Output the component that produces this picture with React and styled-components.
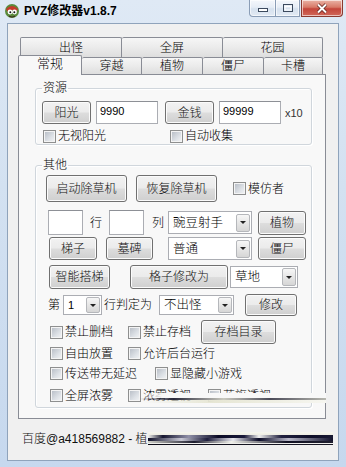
import styled, { createGlobalStyle } from 'styled-components';

const GlobalStyle = createGlobalStyle`
  html, body {
    margin: 0;
    padding: 0;
    overflow: hidden;
  }
  body {
    font-family: "Liberation Sans", "Noto Sans CJK SC", sans-serif;
    font-size: 12px;
    font-weight: 300;
    color: #000;
  }
  * {
    box-sizing: border-box;
  }
`;

const Window = styled.div`
  width: 346px;
  height: 467px;
  display: flex;
  flex-direction: column;
  background: linear-gradient(#dfe9f5 0%, #d3e1f1 40%, #c6d8ee 100%);
`;

const TitleBar = styled.div`
  height: 23px;
  display: flex;
  align-items: flex-start;
  padding-left: 4px;
  padding-right: 3px;
`;

const Title = styled.div`
  margin-left: 4px;
  margin-top: 4px;
  font-weight: bold;
  font-size: 12px;
  line-height: 14px;
  flex: 1;
`;

const CaptionGroup = styled.div`
  display: flex;
`;

const CaptionButton = styled.div`
  width: ${(p) => p.$w}px;
  height: 17px;
  display: flex;
  align-items: center;
  justify-content: center;
  border: 1px solid ${(p) => (p.$close ? '#8a3a30' : '#8a9db6')};
  border-top: none;
  margin-left: ${(p) => (p.$close ? 1 : 0)}px;
  border-radius: ${(p) => p.$radius};
  background: ${(p) =>
    p.$close
      ? 'linear-gradient(#eab3a6 0%, #d87a68 45%, #c4453a 55%, #d0685a 100%)'
      : 'linear-gradient(#f4f7fb 0%, #e6edf6 45%, #d6e1ee 55%, #e2eaf4 100%)'};
  box-shadow: inset 0 0 0 1px rgba(255, 255, 255, 0.6);
`;

const Client = styled.div`
  flex: 1;
  margin: 0 7px 6px;
  background: #f0f0f0;
  border: 1px solid #8fa3bb;
  padding: 13px 0 0 10px;
  display: flex;
  flex-direction: column;
`;

const Tabs = styled.div`
  width: 308px;
  display: flex;
  flex-direction: column;
`;

const TabRow = styled.div`
  display: flex;
  align-items: flex-start;
  height: ${(p) => p.$h}px;
  margin-top: ${(p) => p.$mt || 0}px;
  padding-left: 2px;
`;

const Tab = styled.div`
  width: ${(p) => p.$w}px;
  height: ${(p) => (p.$active ? 20 : p.$h)}px;
  margin-top: ${(p) => (p.$active ? 0 : p.$mt || 0)}px;
  margin-left: ${(p) => (p.$active ? -2 : 0)}px;
  display: flex;
  justify-content: center;
  align-items: center;
  padding-bottom: ${(p) => (p.$active ? 3 : 0)}px;
  border: 1px solid #898c95;
  border-bottom: none;
  border-left-width: ${(p) => (p.$first || p.$active ? 1 : 0)}px;
  border-radius: 2px 2px 0 0;
  background: ${(p) =>
    p.$active ? '#f8f8f8' : 'linear-gradient(#f6f6f6 0%, #ebebeb 50%, #dedede 100%)'};
  position: ${(p) => (p.$active ? 'relative' : 'static')};
  z-index: ${(p) => (p.$active ? 2 : 'auto')};
  font-size: ${(p) => (p.$active ? 13 : 12)}px;
  line-height: 14px;
`;

const Panel = styled.div`
  border: 1px solid #898c95;
  background: #f8f8f8;
  padding: 0 14px 10px 16px;
  display: flex;
  flex-direction: column;
`;

const Group = styled.fieldset`
  margin: ${(p) => p.$mt}px 0 0 0;
  padding: ${(p) => p.$pad};
  border: 1px solid #d0d6dc;
  border-radius: 3px;
  box-shadow: inset 1px 1px 0 #fff, 1px 1px 0 #fff;
  min-width: 0;
  width: 277px;
  display: flex;
  flex-direction: column;
`;

const Legend = styled.legend`
  padding: 0 1px;
  font-size: 12px;
  line-height: 14px;
`;

const Row = styled.div`
  display: flex;
  align-items: center;
  height: ${(p) => p.$h}px;
  margin-top: ${(p) => p.$mt || 0}px;
  margin-left: ${(p) => p.$ml || 0}px;
  position: relative;
`;

const Button = styled.div`
  width: ${(p) => p.$w}px;
  height: ${(p) => p.$h}px;
  margin-left: ${(p) => p.$ml || 0}px;
  flex-shrink: 0;
  display: flex;
  align-items: center;
  justify-content: center;
  border: 1px solid #707070;
  border-radius: 3px;
  background: linear-gradient(#f2f2f2 0%, #ebebeb 48%, #dddddd 52%, #cfcfcf 100%);
  box-shadow: inset 0 0 0 1px #fbfbfb;
  font-size: 12px;
  line-height: 14px;
  color: #111;
`;

const Edit = styled.div`
  width: ${(p) => p.$w}px;
  height: ${(p) => p.$h}px;
  margin-left: ${(p) => p.$ml || 0}px;
  flex-shrink: 0;
  background: #fff;
  border: 1px solid #abadb3;
  border-top-color: #8d9096;
  padding: 3px 0 0 3px;
  font-size: 11px;
  line-height: 13px;
`;

const Combo = styled.div`
  width: ${(p) => p.$w}px;
  height: ${(p) => p.$h}px;
  margin-left: ${(p) => p.$ml || 0}px;
  flex-shrink: 0;
  display: flex;
  align-items: center;
  background: #fff;
  border: 1px solid #abadb3;
  padding: 1px 1px 1px 4px;
`;

const ComboText = styled.div`
  flex: 1;
  font-size: ${(p) => (p.$num ? 11 : 12.5)}px;
  line-height: 14px;
`;

const ComboArrow = styled.div`
  width: 14px;
  height: 100%;
  max-height: 18px;
  display: flex;
  align-items: center;
  justify-content: center;
  border: 1px solid #b5b7bb;
  border-radius: 2px;
  background: linear-gradient(#f7f7f7 0%, #e6e6e6 50%, #d6d6d6 100%);
`;

const Arrow = styled.span`
  width: 0;
  height: 0;
  border-left: 3px solid transparent;
  border-right: 3px solid transparent;
  border-top: 3px solid #222;
`;

const Text = styled.span`
  margin-left: ${(p) => p.$ml || 0}px;
  font-size: ${(p) => p.$size || 12}px;
  line-height: 14px;
  color: ${(p) => p.$color || '#000'};
  white-space: nowrap;
  flex-shrink: 0;
`;

const CheckItem = styled.div`
  width: ${(p) => (p.$w ? `${p.$w}px` : 'auto')};
  margin-left: ${(p) => p.$ml || 0}px;
  display: flex;
  align-items: center;
  gap: 2px;
  flex-shrink: 0;
  white-space: nowrap;
  font-size: 12px;
  line-height: 14px;
`;

const Box = styled.span`
  width: 13px;
  height: 13px;
  flex-shrink: 0;
  border: 1px solid #8e8f8f;
  background: linear-gradient(135deg, #b4bac3 0%, #dde1e6 60%, #f4f5f6 100%);
  box-shadow: inset 0 0 0 1px #f4f4f4;
`;

const Smear = styled.div`
  position: absolute;
  left: ${(p) => p.$left}px;
  top: ${(p) => p.$top}px;
  width: ${(p) => p.$w}px;
  height: 10px;
  background:
    linear-gradient(90deg, rgba(248, 248, 248, 0) 0%, rgba(248, 248, 248, 1) 12%, rgba(248, 248, 248, 1) 100%) 0 0 / 100% 5px no-repeat,
    linear-gradient(90deg, rgba(40, 40, 60, 0) 0%, #2a2a3c 18%, #c9c9bf 45%, #4a4a58 70%, #b8b8b0 100%) 0 5px / 100% 2px no-repeat,
    linear-gradient(90deg, rgba(240, 240, 230, 0) 0%, #e6e6d4 40%, #f6f6f0 100%) 0 7px / 100% 3px no-repeat;
`;

const Footer = styled.div`
  display: flex;
  align-items: center;
  margin-top: 12px;
  padding-left: 4px;
  height: 16px;
`;

const FooterSmear = styled.div`
  width: 185px;
  height: 14px;
  background:
    linear-gradient(90deg, #f4f4f0 0%, #15152e 8%, #9090a8 22%, #0a0a24 38%, #1a1a3a 52%, #f0f0f0 60%, #20203e 72%, #0e0e28 88%, #1a1a34 100%) 0 3px / 100% 3px no-repeat,
    linear-gradient(90deg, #10102a 0%, #c8c8d4 18%, #1e1e3c 32%, #e8e8ee 46%, #0a0a26 60%, #b8b8c8 76%, #12122c 100%) 0 6px / 100% 3px no-repeat,
    linear-gradient(90deg, #d0d0c8 0%, #1c1c2e 25%, #f0f0ea 45%, #101022 75%, #202030 100%) 0 9px / 100% 2px no-repeat,
    linear-gradient(90deg, #0c0c18, #1a1a28) 0 12px / 100% 1px no-repeat,
    linear-gradient(#f6f6f0, #eceade 30%, #f0f0f0 100%);
`;

const AppIcon = () => (
  <svg width="16" height="16" viewBox="0 0 16 16" style={{ marginTop: 3 }}>
    <circle cx="8" cy="8" r="7" fill="#5a8a3c" />
    <path d="M2 6 Q8 0 14 6 L12 9 Q8 5 4 9 Z" fill="#c43a2c" />
    <circle cx="6" cy="9" r="2.4" fill="#fff" />
    <circle cx="10.5" cy="9" r="2.4" fill="#fff" />
    <circle cx="6.3" cy="9.3" r="1" fill="#111" />
    <circle cx="10.3" cy="9.3" r="1" fill="#111" />
    <path d="M5 13 Q8 15 11 13" stroke="#3a2a1a" strokeWidth="1.2" fill="none" />
  </svg>
);

const MinGlyph = () => (
  <svg width="12" height="10" viewBox="0 0 12 10">
    <rect x="1.5" y="5.5" width="9" height="3" fill="#fff" stroke="#3c4a5e" />
  </svg>
);

const MaxGlyph = () => (
  <svg width="12" height="10" viewBox="0 0 12 10">
    <rect x="1.5" y="1.5" width="9" height="7" fill="none" stroke="#3c4a5e" />
    <rect x="3" y="3.5" width="6" height="3.5" fill="none" stroke="#fff" />
  </svg>
);

const CloseGlyph = () => (
  <svg width="14" height="11" viewBox="0 0 14 11">
    <path d="M3 1.5 L11 9.5 M11 1.5 L3 9.5" stroke="#5a1a14" strokeWidth="3.4" />
    <path d="M3 1.5 L11 9.5 M11 1.5 L3 9.5" stroke="#fff" strokeWidth="2" />
  </svg>
);

const ComboBox = ({ w, h, ml, num, children }) => (
  <Combo $w={w} $h={h} $ml={ml}>
    <ComboText $num={num}>{children}</ComboText>
    <ComboArrow>
      <Arrow />
    </ComboArrow>
  </Combo>
);

const Check = ({ w, ml, children }) => (
  <CheckItem $w={w} $ml={ml}>
    <Box />
    {children}
  </CheckItem>
);

export default function App() {
  return (
    <>
      <GlobalStyle />
      <Window>
        <TitleBar>
          <AppIcon />
          <Title>PVZ修改器v1.8.7</Title>
          <CaptionGroup>
            <CaptionButton $w={27} $radius="0 0 0 4px">
              <MinGlyph />
            </CaptionButton>
            <CaptionButton $w={24} $radius="0" style={{ borderLeft: 'none' }}>
              <MaxGlyph />
            </CaptionButton>
            <CaptionButton $w={42} $close $radius="0 0 4px 0">
              <CloseGlyph />
            </CaptionButton>
          </CaptionGroup>
        </TitleBar>

        <Client>
          <Tabs>
            <TabRow $h={20}>
              <Tab $w={102} $h={20} $first>出怪</Tab>
              <Tab $w={101} $h={20}>全屏</Tab>
              <Tab $w={100} $h={20}>花园</Tab>
            </TabRow>
            <TabRow $h={19} $mt={-2}>
              <Tab $w={64} $active>常规</Tab>
              <Tab $w={60} $h={17} $mt={2}>穿越</Tab>
              <Tab $w={61} $h={17} $mt={2}>植物</Tab>
              <Tab $w={61} $h={17} $mt={2}>僵尸</Tab>
              <Tab $w={59} $h={17} $mt={2}>卡槽</Tab>
            </TabRow>

            <Panel>
              <Group $mt={6} $pad="6px 5px 1px 6px">
                <Legend>资源</Legend>
                <Row $h={23}>
                  <Button $w={49} $h={23}>阳光</Button>
                  <Edit $w={62} $h={23} $ml={5}>9990</Edit>
                  <Button $w={49} $h={23} $ml={7}>金钱</Button>
                  <Edit $w={62} $h={23} $ml={5}>99999</Edit>
                  <Text $ml={4} $size={11} $color="#333">x10</Text>
                </Row>
                <Row $h={14} $mt={5} $ml={1}>
                  <Check w={127}>无视阳光</Check>
                  <Check>自动收集</Check>
                </Row>
              </Group>

              <Group $mt={13} $pad="3px 5px 5px 6px">
                <Legend>其他</Legend>
                <Row $h={27} $ml={4}>
                  <Button $w={81} $h={27}>启动除草机</Button>
                  <Button $w={81} $h={27} $ml={9}>恢复除草机</Button>
                  <Check ml={16}>模仿者</Check>
                </Row>
                <Row $h={25} $mt={8} $ml={6}>
                  <Edit $w={35} $h={25} />
                  <Text $ml={7}>行</Text>
                  <Edit $w={35} $h={25} $ml={7} />
                  <Text $ml={8}>列</Text>
                  <ComboBox w={84} h={23} ml={4}>豌豆射手</ComboBox>
                  <Button $w={48} $h={24} $ml={6}>植物</Button>
                </Row>
                <Row $h={23} $mt={2} $ml={7}>
                  <Button $w={48} $h={23}>梯子</Button>
                  <Button $w={47} $h={23} $ml={9}>墓碑</Button>
                  <ComboBox w={84} h={23} ml={15}>普通</ComboBox>
                  <Button $w={48} $h={23} $ml={6}>僵尸</Button>
                </Row>
                <Row $h={24} $mt={5} $ml={7}>
                  <Button $w={61} $h={24}>智能搭梯</Button>
                  <Button $w={98} $h={24} $ml={20}>格子修改为</Button>
                  <ComboBox w={68} h={22} ml={2}>草地</ComboBox>
                </Row>
                <Row $h={22} $mt={5} $ml={6}>
                  <Text>第</Text>
                  <ComboBox w={39} h={20} ml={3} num>1</ComboBox>
                  <Text $ml={2}>行判定为</Text>
                  <ComboBox w={75} h={20} ml={7}>不出怪</ComboBox>
                  <Button $w={52} $h={22} $ml={11}>修改</Button>
                </Row>
                <Row $h={24} $mt={4} $ml={8}>
                  <Check w={78}>禁止删档</Check>
                  <Check w={73}>禁止存档</Check>
                  <Button $w={75} $h={24}>存档目录</Button>
                </Row>
                <Row $h={13} $mt={3} $ml={8}>
                  <Check w={78}>自由放置</Check>
                  <Check>允许后台运行</Check>
                </Row>
                <Row $h={13} $mt={7} $ml={8}>
                  <Check w={105}>传送带无延迟</Check>
                  <Check>显隐藏小游戏</Check>
                </Row>
                <Row $h={13} $mt={9} $ml={8}>
                  <Check w={78}>全屏浓雾</Check>
                  <Check w={80}>浓雾透视</Check>
                  <Check>花旗透视</Check>
                  <Smear $left={90} $top={4} $w={186} />
                </Row>
              </Group>
            </Panel>
          </Tabs>

          <Footer>
            <Text $color="#111">百度@a418569882 - 植</Text>
            <FooterSmear />
          </Footer>
        </Client>
      </Window>
    </>
  );
}
